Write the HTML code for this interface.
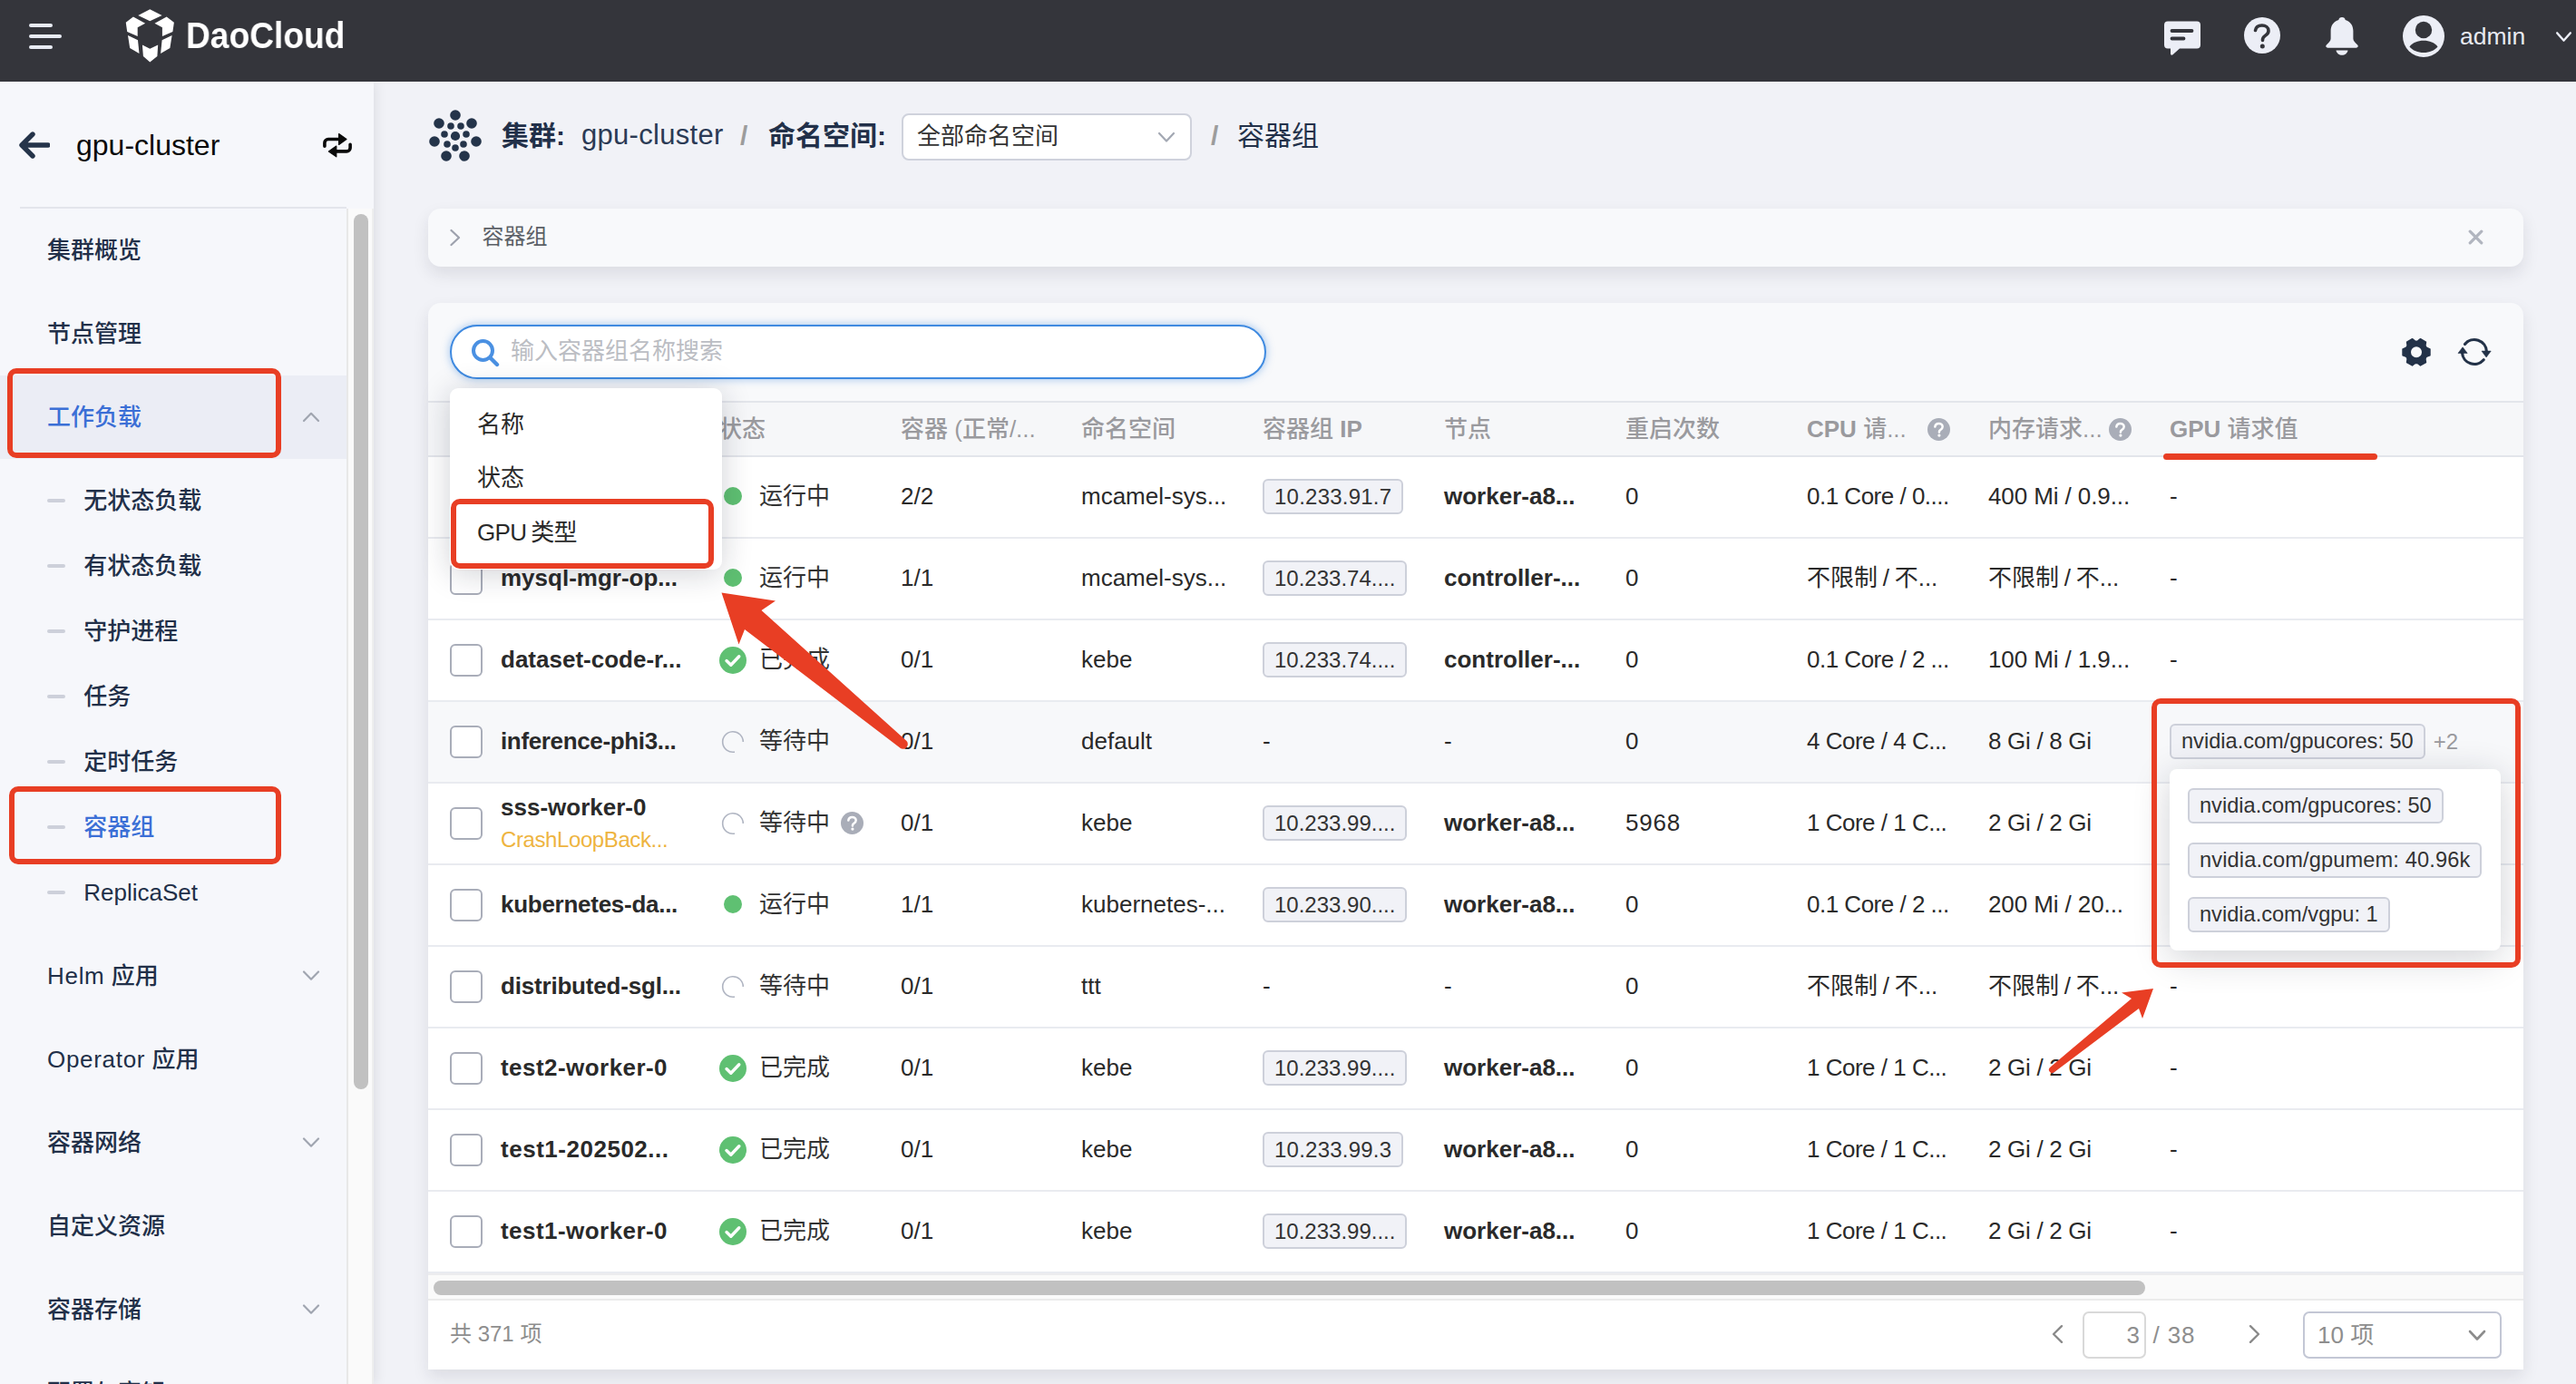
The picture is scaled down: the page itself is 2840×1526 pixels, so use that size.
<!DOCTYPE html>
<html lang="zh-CN">
<head>
<meta charset="utf-8">
<title>DaoCloud - 容器组</title>
<style>
*{box-sizing:border-box;margin:0;padding:0}
html,body{width:2840px;height:1526px;overflow:hidden}
body{position:relative;background:#f1f2f7;font-family:"Liberation Sans","Noto Sans CJK SC",sans-serif;color:#2b3648;font-size:26px}
.abs{position:absolute}
b{font-weight:700}
i{font-style:normal}
/* header */
#hd{position:absolute;left:0;top:0;width:2840px;height:90px;background:#34353b;z-index:50}
#hd .ham i{position:absolute;left:32px;height:4px;border-radius:2px;background:#e8ebf4}
#logo-t{position:absolute;left:205px;top:14px;height:50px;line-height:50px;font-weight:700;font-size:41px;color:#fff;transform:scaleX(.906);transform-origin:0 0;white-space:nowrap;will-change:transform}
#admin{position:absolute;left:2712px;top:24px;line-height:32px;font-size:26.500px;color:#e8eaf2}
/* sidebar */
#sb{position:absolute;left:0;top:90px;width:412px;height:1436px;background:#f6f7fb;z-index:7;box-shadow:1px 0 13px rgba(30,30,36,.11)}
#sb .ttl{position:absolute;left:84px;top:50px;font-size:32px;line-height:40px;color:#0a0a0a}
#sb .hr{position:absolute;left:22px;top:138px;width:360px;height:2px;background:#e3e5ec}
#sb .vr{position:absolute;left:382px;top:140px;width:30px;height:1300px;background:#fafafa;border-left:2px solid #e8e8e8;border-right:2px solid #eee}
#sb .thumb{position:absolute;left:390px;top:146px;width:16px;height:965px;border-radius:8px;background:#c1c1c1}
.mi{position:absolute;left:0;width:382px;height:92px;line-height:93px;padding-left:52px;font-size:26px;font-weight:500;color:#223049}
.mi.act{background:#ebedf5;color:#3b6fd6}
.mi svg{position:absolute;left:332.500px;top:40px;width:20px;height:12px}
.si{position:absolute;left:0;width:382px;height:72px;line-height:75px;padding-left:92.300px;font-size:26px;font-weight:500;color:#223049}
.si:before{content:"";position:absolute;left:52px;top:35px;width:20px;height:4px;border-radius:2px;background:#cdd0da}
.si.act{color:#3b6fd6}
.lt{letter-spacing:.700px}
.red{position:absolute;border:6px solid #e83e24;border-radius:10px;z-index:40}
/* main */
#main{position:absolute;left:412px;top:90px;width:2428px;height:1436px;background:#f1f2f7;z-index:6}
.bc{position:absolute;top:125px;height:50px;line-height:50px;font-size:30px;white-space:nowrap;z-index:7}
.card{position:absolute;left:472px;width:2310px;background:#f8f9fb;border-radius:14px;box-shadow:0 8px 18px rgba(30,32,45,.10);z-index:7}
#search{position:absolute;left:496px;top:358px;width:900px;height:59.500px;border:2px solid #3f8ae0;border-radius:30px;background:#fff;box-shadow:0 0 10px rgba(63,138,224,.5);z-index:9}
#search span{position:absolute;left:65px;top:0;line-height:55px;font-size:26px;color:#bbbdc3}
#th{position:absolute;left:472px;top:442px;width:2310px;height:62px;background:#f6f7f9;border-top:2px solid #e3e5eb;border-bottom:2px solid #e3e5eb;z-index:8}
#th span{position:absolute;top:0;line-height:58px;font-size:26px;font-weight:500;color:#9a9a9e;white-space:nowrap}
.q{position:absolute;width:25px;height:25px}
.tr{position:absolute;left:472px;width:2310px;height:90px;background:#fff;border-bottom:2px solid #e9ebf0;z-index:8}
.tr.hover{background:#f7f8fa}
.c{position:absolute;top:0;height:88px;line-height:86px;white-space:nowrap;font-size:26px;color:#2a2a2a}
.c b{font-weight:700;color:#2a2a2a}
.cb{position:absolute;left:24px;top:26px;width:36px;height:36px;border:2px solid #a9adb9;border-radius:6px;background:#fff}
.nm{left:80px}
.nm.two{line-height:36px;padding-top:8px}
.nm.two b,.nm.two em{display:block;width:max-content}
.nm.two em{font-style:normal;color:#eeb43f;font-size:24px;letter-spacing:-.400px}
.st{left:322px}
.dot{position:absolute;left:4px;top:33px;width:20px;height:20px;border-radius:50%;background:#5fc072}
.chk{position:absolute;left:-1px;top:29px;width:30px;height:30px}
.spin{position:absolute;left:1px;top:31px;width:26px;height:26px}
.stt{position:absolute;left:43px;top:0;color:#333}
.q2{left:133px;top:31px}
.tag{display:inline-block;height:39px;line-height:35px;padding:0 11px;border:2px solid #cdd0da;border-radius:6px;background:#f1f2f7;font-size:24px;color:#333;vertical-align:middle;white-space:nowrap}
.plus{color:#9a9a9e;font-size:24px;margin-left:9px}
#pop{position:absolute;left:2392px;top:848px;width:365px;height:200px;background:#fff;border-radius:8px;box-shadow:0 8px 40px rgba(20,25,45,.2);z-index:30}
.c .tag{position:relative;top:-1.200px}
.tag.nv{font-size:23.600px}
#pop .tag{position:absolute;left:20px}
#dd{position:absolute;left:496px;top:428px;width:300px;height:200px;background:#fff;border-radius:9px;box-shadow:0 4px 34px rgba(20,25,45,.2);z-index:30}
#dd span{position:absolute;left:30px;line-height:60px;font-size:26px;color:#2a2a2a;white-space:nowrap}
#ft{position:absolute;left:472px;top:1433px;width:2310px;height:77px;background:#fff;border-top:0 solid #e6e8ef;z-index:8}
.pg{position:absolute;font-size:26px;color:#8e8e8e;line-height:50px;white-space:nowrap}
.box{position:absolute;top:13px;height:52px;border:2px solid #d3d6df;border-radius:7px;background:#fff}
</style>
</head>
<body>

<!-- ================= header ================= -->
<div id="hd">
  <div class="ham"><i style="top:26px;width:26px"></i><i style="top:38px;width:36px"></i><i style="top:50px;width:26px"></i></div>
  <svg class="abs" style="left:138px;top:10px;width:55px;height:59px" viewBox="0 0 55 59">
    <g fill="#fff">
      <path d="M27.300 0.300L40.600 7 27.300 13.200 14.300 7z"/>
      <path d="M0.750 14.800L8.900 8.400 22.100 15.800 13.700 20.200 13.700 30.100 2.200 25.100z"/>
      <path d="M53.900 14.800L45.700 8.400 32.500 15.800 40.900 20.200 40.900 30.100 52.400 25.100z"/>
      <path d="M3 29.100L14 34.300 15.500 49 5.200 43.100z"/>
      <path d="M51.600 29.100L40.600 34.300 39.100 49 49.400 43.100z"/>
      <path d="M18.900 39.400L27.300 43.800 36.200 39.400 35.400 52 27.300 58.600 19.900 52z"/>
    </g>
  </svg>
  <div id="logo-t">DaoCloud</div>
  <!-- chat -->
  <svg class="abs" style="left:2386px;top:23px;width:40px;height:38px" viewBox="0 0 40 38">
    <path d="M4 0.5h32a4 4 0 0 1 4 4v22a4 4 0 0 1-4 4H17l-7.5 6.8c-1 .9-2.500.2-2.500-1.100V30.500H4a4 4 0 0 1-4-4v-22a4 4 0 0 1 4-4z" fill="#eceef6"/>
    <path d="M8.500 11h22M8.500 19.500h13" stroke="#34353b" stroke-width="3.800" stroke-linecap="round"/>
  </svg>
  <!-- help -->
  <svg class="abs" style="left:2474px;top:19px;width:40px;height:40px" viewBox="0 0 40 40">
    <circle cx="20" cy="20" r="20" fill="#eceef6"/>
    <path d="M12.500 14.500c.6-3.700 3.600-5.500 7.300-5.500 4 0 7.200 2.300 7.200 5.900 0 2.800-1.700 4.100-3.700 5.500-1.900 1.300-2.800 2.200-2.800 4.400v.7" fill="none" stroke="#34353b" stroke-width="3.600" stroke-linecap="round" stroke-linejoin="round"/>
    <circle cx="20.300" cy="32" r="2.500" fill="#34353b"/>
  </svg>
  <!-- bell -->
  <svg class="abs" style="left:2561px;top:18px;width:42px;height:44px" viewBox="0 0 40 44" preserveAspectRatio="none">
    <path d="M20 1c2 0 3.300 1.300 3.500 3 5.300 1.600 8.300 6.300 8.300 12v8.500c0 2.300 1.600 4.300 4.500 7 1.200 1.200.6 3.200-1.400 3.200H5.100c-2 0-2.600-2-1.400-3.200 2.900-2.700 4.500-4.700 4.500-7V16c0-5.700 3-10.400 8.300-12C16.700 2.300 18 1 20 1z" fill="#eceef6"/>
    <path d="M13.800 37.500h12.400c-.6 3.300-3.200 5.300-6.200 5.300s-5.600-2-6.200-5.300z" fill="#eceef6"/>
  </svg>
  <!-- avatar -->
  <svg class="abs" style="left:2649px;top:17px;width:46px;height:46px" viewBox="0 0 46 46">
    <circle cx="23" cy="23" r="23" fill="#eceef6"/>
    <circle cx="23" cy="16" r="9.200" fill="#34353b"/>
    <path d="M7.500 34.500C11 30 16.500 27.800 23 27.800s12 2.200 15.500 6.700C35 38.800 29.500 41 23 41s-12-2.200-15.500-6.500z" fill="#34353b"/>
  </svg>
  <div id="admin">admin</div>
  <svg class="abs" style="left:2817px;top:33.500px;width:19px;height:13.500px" viewBox="0 0 22 14" preserveAspectRatio="none"><path d="M2.500 2.500l8.500 8.500 8.500-8.500" fill="none" stroke="#eceef6" stroke-width="2.600" stroke-linecap="round" stroke-linejoin="round"/></svg>
</div>

<!-- ================= sidebar ================= -->
<div id="sb">
  <svg class="abs" style="left:21px;top:55px;width:34px;height:30px" viewBox="0 0 34 30"><path d="M15 3L3 15l12 12M4 15h28" fill="none" stroke="#25344a" stroke-width="5.400" stroke-linecap="round" stroke-linejoin="round"/></svg>
  <div class="ttl">gpu-cluster</div>
  <svg class="abs" style="left:350px;top:50px;width:44px;height:40px" viewBox="350 140 44 40"><path d="M357.900 161.300V157.500a4 4 0 0 1 4-4H376M386.100 159.200V162.900a4 4 0 0 1-4 4H368" fill="none" stroke="#0a0a0a" stroke-width="3.600" stroke-linecap="round"/><path d="M373.600 147.600L382 153.500 373.600 159.400zM370.800 161L362.400 166.900 370.800 172.800z" fill="#0a0a0a" stroke="#0a0a0a" stroke-width="1.200" stroke-linejoin="round"/></svg>
  <div class="hr"></div>
  <div class="vr"></div>
  <div class="thumb"></div>

  <div class="mi" style="top:140px">集群概览</div>
  <div class="mi" style="top:232px">节点管理</div>
  <div class="mi act" style="top:324px">工作负载<svg viewBox="0 0 20 12"><path d="M2 10L10 1.800l8 8.200" fill="none" stroke="#a0a5b0" stroke-width="2.200" stroke-linecap="round" stroke-linejoin="round"/></svg></div>
  <div class="si" style="top:425px">无状态负载</div>
  <div class="si" style="top:497px">有状态负载</div>
  <div class="si" style="top:569px">守护进程</div>
  <div class="si" style="top:641px">任务</div>
  <div class="si" style="top:713px">定时任务</div>
  <div class="si act" style="top:785px">容器组</div>
  <div class="si" style="top:857px">ReplicaSet</div>
  <div class="mi" style="top:940px"><span class="lt">Helm</span> 应用<svg viewBox="0 0 20 12"><path d="M2 1.500L10 9.700l8-8.200" fill="none" stroke="#a0a5b0" stroke-width="2.200" stroke-linecap="round" stroke-linejoin="round"/></svg></div>
  <div class="mi" style="top:1032px"><span class="lt">Operator</span> 应用</div>
  <div class="mi" style="top:1124px">容器网络<svg viewBox="0 0 20 12"><path d="M2 1.500L10 9.700l8-8.200" fill="none" stroke="#a0a5b0" stroke-width="2.200" stroke-linecap="round" stroke-linejoin="round"/></svg></div>
  <div class="mi" style="top:1216px">自定义资源</div>
  <div class="mi" style="top:1308px">容器存储<svg viewBox="0 0 20 12"><path d="M2 1.500L10 9.700l8-8.200" fill="none" stroke="#a0a5b0" stroke-width="2.200" stroke-linecap="round" stroke-linejoin="round"/></svg></div>
  <div class="mi" style="top:1400px">配置与密钥</div>
</div>
<div class="red" style="left:8px;top:406px;width:302px;height:99px"></div>
<div class="red" style="left:10px;top:867px;width:300px;height:86px"></div>

<!-- ================= main ================= -->
<div id="main"></div>

<!-- breadcrumb -->
<svg class="abs" style="left:473px;top:121px;width:58px;height:58px;z-index:7" viewBox="0 0 58 58">
  <g fill="#24344a">
    <circle cx="29" cy="6" r="5.800"/><circle cx="47" cy="15" r="5.800"/><circle cx="52" cy="35" r="5.800"/><circle cx="39" cy="51" r="5.800"/><circle cx="19" cy="51" r="5.800"/><circle cx="6" cy="35" r="5.800"/><circle cx="11" cy="15" r="5.800"/>
    <circle cx="29" cy="29" r="5.100"/>
    <circle cx="24" cy="18" r="3.800"/><circle cx="35" cy="18" r="3.800"/><circle cx="41" cy="27" r="3.800"/><circle cx="38" cy="38" r="3.800"/><circle cx="29" cy="42" r="3.800"/><circle cx="20" cy="38" r="3.800"/><circle cx="17" cy="27" r="3.800"/>
  </g>
</svg>
<div class="bc" style="left:553px;font-weight:700;color:#223049">集群:</div>
<div class="bc" style="left:641px;top:124px;color:#2b3a55;font-size:31px;letter-spacing:.300px">gpu-cluster</div>
<div class="bc" style="left:816px;color:#9c9c9c;font-weight:700">/</div>
<div class="bc" style="left:847px;font-weight:700;color:#223049">命名空间:</div>
<div class="abs" style="left:994px;top:125px;width:320px;height:52px;border:2px solid #cfd2dc;border-radius:8px;background:#fff;z-index:7"></div>
<div class="bc" style="left:1011px;font-size:26px;color:#333">全部命名空间</div>
<svg class="abs" style="left:1276px;top:145px;width:20px;height:13px;z-index:8" viewBox="0 0 20 13"><path d="M2 2l8 8.500L18 2" fill="none" stroke="#a3a8b3" stroke-width="2.200" stroke-linecap="round" stroke-linejoin="round"/></svg>
<div class="bc" style="left:1335px;color:#9c9c9c;font-weight:700">/</div>
<div class="bc" style="left:1364px;color:#24324a">容器组</div>

<!-- collapse card -->
<div class="card" style="top:230px;height:64px"></div>
<svg class="abs" style="left:495px;top:252px;width:14px;height:20px;z-index:8" viewBox="0 0 14 20"><path d="M2.500 2l8.500 8-8.500 8" fill="none" stroke="#9da1ad" stroke-width="2.200" stroke-linecap="round" stroke-linejoin="round"/></svg>
<div class="abs" style="left:531.500px;top:236px;line-height:50px;font-size:24px;color:#5b5f66;z-index:8">容器组</div>
<svg class="abs" style="left:2721px;top:253px;width:17px;height:17px;z-index:8" viewBox="0 0 17 17"><path d="M2.200 2.200l12.600 12.600M14.800 2.200L2.200 14.800" fill="none" stroke="#b1b5bf" stroke-width="3.200" stroke-linecap="round"/></svg>

<!-- table card -->
<div class="card" style="top:334px;height:1176px;border-radius:14px 14px 0 0"></div>
<div id="search">
  <svg class="abs" style="left:21px;top:13px;width:32px;height:32px" viewBox="0 0 32 32"><circle cx="13.500" cy="13.500" r="10.500" fill="none" stroke="#4a90e2" stroke-width="4"/><path d="M21.500 21.500l7.500 7.500" stroke="#4a90e2" stroke-width="4.400" stroke-linecap="round"/></svg>
  <span>输入容器组名称搜索</span>
</div>
<!-- gear -->
<svg class="abs" style="left:2640px;top:365px;width:50px;height:48px;z-index:9" viewBox="2640 365 50 48"><path fill="#233248" stroke="#233248" stroke-width="1.600" stroke-linejoin="round" fill-rule="evenodd" d="M2678.900 384.900 L2678.900 391.700 L2675.600 393 L2674.300 394.200 L2673.900 396 L2674.400 399.500 L2668.500 402.900 L2665.700 400.700 L2664 400.200 L2662.300 400.700 L2659.500 402.900 L2653.600 399.500 L2654.100 396 L2653.700 394.200 L2652.400 393 L2649.100 391.700 L2649.100 384.900 L2652.400 383.600 L2653.700 382.400 L2654.100 380.600 L2653.600 377.100 L2659.500 373.700 L2662.300 375.900 L2664 376.400 L2665.700 375.900 L2668.500 373.700 L2674.400 377.100 L2673.900 380.600 L2674.300 382.400 L2675.600 383.600z M2657.200 388.300a6.800 6.800 0 1 0 13.600 0a6.800 6.800 0 1 0 -13.600 0z"/></svg>
<!-- refresh -->
<svg class="abs" style="left:2700px;top:365px;width:56px;height:48px;z-index:9" viewBox="2700 365 56 48"><path d="M2717.500 379.500A13.500 13.500 0 0 1 2741.400 387.500M2738.200 396.800A13.500 13.500 0 0 1 2714.500 389" fill="none" stroke="#233248" stroke-width="3.200" stroke-linecap="round"/><path d="M2736 387.100h10.200l-5.100 6.800z" fill="#233248" stroke="#233248" stroke-width=".600" stroke-linejoin="round"/><path d="M2710 389.400h10.200l-5.100-6.600z" fill="#233248" stroke="#233248" stroke-width=".600" stroke-linejoin="round"/></svg>

<div id="th">
  <span style="left:80px">名称</span>
  <span style="left:320px">状态</span>
  <span style="left:521px">容器 (正常/...</span>
  <span style="left:720px">命名空间</span>
  <span style="left:920px">容器组 <b>IP</b></span>
  <span style="left:1120px">节点</span>
  <span style="left:1320px">重启次数</span>
  <span style="left:1520px"><b>CPU</b> 请...</span>
  <span style="left:1720px">内存请求...</span>
  <span style="left:1920px"><b>GPU</b> 请求值</span>
  <span style="left:1653px;top:17px;line-height:0"><svg class="q" viewBox="0 0 24 24"><circle cx="12" cy="12" r="12" fill="#a9adb8"/><path d="M8 9.200c.2-2.200 1.800-3.500 4-3.500 2.300 0 4 1.400 4 3.400 0 1.500-.8 2.300-2 3.100-1.100.7-1.600 1.300-1.600 2.400v.3" fill="none" stroke="#fff" stroke-width="2.400" stroke-linecap="round"/><circle cx="12.400" cy="18.300" r="1.550" fill="#fff"/></svg></span>
  <span style="left:1853px;top:17px;line-height:0"><svg class="q" viewBox="0 0 24 24"><circle cx="12" cy="12" r="12" fill="#a9adb8"/><path d="M8 9.200c.2-2.200 1.800-3.500 4-3.500 2.300 0 4 1.400 4 3.400 0 1.500-.8 2.300-2 3.100-1.100.7-1.600 1.300-1.600 2.400v.3" fill="none" stroke="#fff" stroke-width="2.400" stroke-linecap="round"/><circle cx="12.400" cy="18.300" r="1.550" fill="#fff"/></svg></span>
</div>
<div class="abs" style="left:2385px;top:500px;width:236px;height:7px;border-radius:3.500px;background:#e83e24;z-index:40"></div>

<div class="tr" style="top:504px">
<i class="cb"></i>
<span class="c nm"><b>mysql-mgr-op...</b></span>
<span class="c st"><i class="dot"></i><span class="stt">运行中</span></span>
<span class="c" style="left:521px">2/2</span>
<span class="c" style="left:720px">mcamel-sys...</span>
<span class="c" style="left:920px"><span class="tag" style="letter-spacing:.23px">10.233.91.7</span></span>
<span class="c" style="left:1120px"><b>worker-a8...</b></span>
<span class="c" style="left:1320px">0</span>
<span class="c" style="left:1520px;letter-spacing:-.5px">0.1 Core / 0....</span>
<span class="c" style="left:1720px;letter-spacing:-.1px">400 Mi / 0.9...</span>
<span class="c" style="left:1920px">-</span>
</div>
<div class="tr" style="top:594px">
<i class="cb"></i>
<span class="c nm"><b>mysql-mgr-op...</b></span>
<span class="c st"><i class="dot"></i><span class="stt">运行中</span></span>
<span class="c" style="left:521px">1/1</span>
<span class="c" style="left:720px">mcamel-sys...</span>
<span class="c" style="left:920px"><span class="tag">10.233.74....</span></span>
<span class="c" style="left:1120px"><b>controller-...</b></span>
<span class="c" style="left:1320px">0</span>
<span class="c" style="left:1520px;word-spacing:-1.5px">不限制 / 不...</span>
<span class="c" style="left:1720px;word-spacing:-1.5px">不限制 / 不...</span>
<span class="c" style="left:1920px">-</span>
</div>
<div class="tr" style="top:684px">
<i class="cb"></i>
<span class="c nm"><b>dataset-code-r...</b></span>
<span class="c st"><svg class="chk" viewBox="0 0 30 30"><circle cx="15" cy="15" r="15" fill="#5fc072"/><path d="M8 15.6l4.8 4.6 9-9.4" fill="none" stroke="#fff" stroke-width="3.4" stroke-linecap="round" stroke-linejoin="round"/></svg><span class="stt">已完成</span></span>
<span class="c" style="left:521px">0/1</span>
<span class="c" style="left:720px">kebe</span>
<span class="c" style="left:920px"><span class="tag">10.233.74....</span></span>
<span class="c" style="left:1120px"><b>controller-...</b></span>
<span class="c" style="left:1320px">0</span>
<span class="c" style="left:1520px;letter-spacing:-.5px">0.1 Core / 2 ...</span>
<span class="c" style="left:1720px;letter-spacing:-.1px">100 Mi / 1.9...</span>
<span class="c" style="left:1920px">-</span>
</div>
<div class="tr hover" style="top:774px">
<i class="cb"></i>
<span class="c nm"><b style="letter-spacing:-0.35px">inference-phi3...</b></span>
<span class="c st"><svg class="spin" viewBox="0 0 26 26"><path d="M24.3 13A11.3 11.3 0 1 0 14.96 24.13" fill="none" stroke="#b0b5c2" stroke-width="1.6"/></svg><span class="stt">等待中</span></span>
<span class="c" style="left:521px">0/1</span>
<span class="c" style="left:720px">default</span>
<span class="c" style="left:920px">-</span>
<span class="c" style="left:1120px">-</span>
<span class="c" style="left:1320px">0</span>
<span class="c" style="left:1520px;letter-spacing:-.5px">4 Core / 4 C...</span>
<span class="c" style="left:1720px;letter-spacing:-.3px">8 Gi / 8 Gi</span>
<span class="c" style="left:1920px"><span class="tag nv">nvidia.com/gpucores: 50</span><span class="plus">+2</span></span>
</div>
<div class="tr" style="top:864px">
<i class="cb"></i>
<span class="c nm two"><b>sss-worker-0</b><em>CrashLoopBack...</em></span>
<span class="c st"><svg class="spin" viewBox="0 0 26 26"><path d="M24.3 13A11.3 11.3 0 1 0 14.96 24.13" fill="none" stroke="#b0b5c2" stroke-width="1.6"/></svg><span class="stt">等待中</span><svg class="q q2" viewBox="0 0 24 24"><circle cx="12" cy="12" r="12" fill="#a9adb8"/><path d="M8 9.200c.2-2.200 1.800-3.500 4-3.500 2.300 0 4 1.400 4 3.400 0 1.500-.8 2.300-2 3.100-1.100.7-1.600 1.300-1.600 2.400v.3" fill="none" stroke="#fff" stroke-width="2.400" stroke-linecap="round"/><circle cx="12.400" cy="18.300" r="1.550" fill="#fff"/></svg></span>
<span class="c" style="left:521px">0/1</span>
<span class="c" style="left:720px">kebe</span>
<span class="c" style="left:920px"><span class="tag">10.233.99....</span></span>
<span class="c" style="left:1120px"><b>worker-a8...</b></span>
<span class="c" style="left:1320px;letter-spacing:.8px">5968</span>
<span class="c" style="left:1520px;letter-spacing:-.5px">1 Core / 1 C...</span>
<span class="c" style="left:1720px;letter-spacing:-.3px">2 Gi / 2 Gi</span>
</div>
<div class="tr" style="top:954px">
<i class="cb"></i>
<span class="c nm"><b style="letter-spacing:-0.27px">kubernetes-da...</b></span>
<span class="c st"><i class="dot"></i><span class="stt">运行中</span></span>
<span class="c" style="left:521px">1/1</span>
<span class="c" style="left:720px">kubernetes-...</span>
<span class="c" style="left:920px"><span class="tag">10.233.90....</span></span>
<span class="c" style="left:1120px"><b>worker-a8...</b></span>
<span class="c" style="left:1320px">0</span>
<span class="c" style="left:1520px;letter-spacing:-.5px">0.1 Core / 2 ...</span>
<span class="c" style="left:1720px;letter-spacing:-.1px">200 Mi / 20...</span>
</div>
<div class="tr" style="top:1044px">
<i class="cb"></i>
<span class="c nm"><b style="letter-spacing:-0.19px">distributed-sgl...</b></span>
<span class="c st"><svg class="spin" viewBox="0 0 26 26"><path d="M24.3 13A11.3 11.3 0 1 0 14.96 24.13" fill="none" stroke="#b0b5c2" stroke-width="1.6"/></svg><span class="stt">等待中</span></span>
<span class="c" style="left:521px">0/1</span>
<span class="c" style="left:720px">ttt</span>
<span class="c" style="left:920px">-</span>
<span class="c" style="left:1120px">-</span>
<span class="c" style="left:1320px">0</span>
<span class="c" style="left:1520px;word-spacing:-1.5px">不限制 / 不...</span>
<span class="c" style="left:1720px;word-spacing:-1.5px">不限制 / 不...</span>
<span class="c" style="left:1920px">-</span>
</div>
<div class="tr" style="top:1134px">
<i class="cb"></i>
<span class="c nm"><b style="letter-spacing:0.45px">test2-worker-0</b></span>
<span class="c st"><svg class="chk" viewBox="0 0 30 30"><circle cx="15" cy="15" r="15" fill="#5fc072"/><path d="M8 15.6l4.8 4.6 9-9.4" fill="none" stroke="#fff" stroke-width="3.4" stroke-linecap="round" stroke-linejoin="round"/></svg><span class="stt">已完成</span></span>
<span class="c" style="left:521px">0/1</span>
<span class="c" style="left:720px">kebe</span>
<span class="c" style="left:920px"><span class="tag">10.233.99....</span></span>
<span class="c" style="left:1120px"><b>worker-a8...</b></span>
<span class="c" style="left:1320px">0</span>
<span class="c" style="left:1520px;letter-spacing:-.5px">1 Core / 1 C...</span>
<span class="c" style="left:1720px;letter-spacing:-.3px">2 Gi / 2 Gi</span>
<span class="c" style="left:1920px">-</span>
</div>
<div class="tr" style="top:1224px">
<i class="cb"></i>
<span class="c nm"><b style="letter-spacing:0.52px">test1-202502...</b></span>
<span class="c st"><svg class="chk" viewBox="0 0 30 30"><circle cx="15" cy="15" r="15" fill="#5fc072"/><path d="M8 15.6l4.8 4.6 9-9.4" fill="none" stroke="#fff" stroke-width="3.4" stroke-linecap="round" stroke-linejoin="round"/></svg><span class="stt">已完成</span></span>
<span class="c" style="left:521px">0/1</span>
<span class="c" style="left:720px">kebe</span>
<span class="c" style="left:920px"><span class="tag" style="letter-spacing:.23px">10.233.99.3</span></span>
<span class="c" style="left:1120px"><b>worker-a8...</b></span>
<span class="c" style="left:1320px">0</span>
<span class="c" style="left:1520px;letter-spacing:-.5px">1 Core / 1 C...</span>
<span class="c" style="left:1720px;letter-spacing:-.3px">2 Gi / 2 Gi</span>
<span class="c" style="left:1920px">-</span>
</div>
<div class="tr" style="top:1314px">
<i class="cb"></i>
<span class="c nm"><b style="letter-spacing:0.45px">test1-worker-0</b></span>
<span class="c st"><svg class="chk" viewBox="0 0 30 30"><circle cx="15" cy="15" r="15" fill="#5fc072"/><path d="M8 15.6l4.8 4.6 9-9.4" fill="none" stroke="#fff" stroke-width="3.4" stroke-linecap="round" stroke-linejoin="round"/></svg><span class="stt">已完成</span></span>
<span class="c" style="left:521px">0/1</span>
<span class="c" style="left:720px">kebe</span>
<span class="c" style="left:920px"><span class="tag">10.233.99....</span></span>
<span class="c" style="left:1120px"><b>worker-a8...</b></span>
<span class="c" style="left:1320px">0</span>
<span class="c" style="left:1520px;letter-spacing:-.5px">1 Core / 1 C...</span>
<span class="c" style="left:1720px;letter-spacing:-.3px">2 Gi / 2 Gi</span>
<span class="c" style="left:1920px">-</span>
</div>

<!-- h scrollbar -->
<div class="abs" style="left:472px;top:1404px;width:2310px;height:30px;background:#fafafa;border-top:2px solid #ececee;border-bottom:2px solid #ebebeb;z-index:9"></div>
<div class="abs" style="left:478px;top:1412px;width:1887px;height:16px;border-radius:8px;background:#c1c1c1;z-index:9"></div>

<!-- footer -->
<div id="ft">
  <div class="pg" style="left:24px;top:13px;font-size:24px">共 371 项</div>
  <svg class="abs" style="left:1788px;top:26px;width:15px;height:24px" viewBox="0 0 15 24"><path d="M13 3.200L4 12l9 8.800" fill="none" stroke="#8a8a8a" stroke-width="2.400" stroke-linecap="round" stroke-linejoin="round"/></svg>
  <div class="box" style="left:1824px;width:70px;border-color:#d9d9d9"></div>
  <div class="pg" style="left:1824px;top:13.500px;width:63px;text-align:right">3</div>
  <div class="pg" style="left:1901.500px;top:13.500px;letter-spacing:.900px">/ 38</div>
  <svg class="abs" style="left:2006px;top:26px;width:15px;height:24px" viewBox="0 0 15 24"><path d="M3 3.200L12 12l-9 8.800" fill="none" stroke="#8a8a8a" stroke-width="2.400" stroke-linecap="round" stroke-linejoin="round"/></svg>
  <div class="box" style="left:2066.500px;width:219.500px;border-color:#c3c7d5"></div>
  <div class="pg" style="left:2083px;top:13.500px">10 项</div>
  <svg class="abs" style="left:2248.500px;top:33px;width:20px;height:13px" viewBox="0 0 20 13"><path d="M2 2l8 8.500L18 2" fill="none" stroke="#8c8c8c" stroke-width="2.600" stroke-linecap="round" stroke-linejoin="round"/></svg>
</div>

<!-- dropdown -->
<div id="dd">
  <span style="top:10px">名称</span>
  <span style="top:69px">状态</span>
  <span style="top:129px;letter-spacing:-.600px;word-spacing:-2px">GPU 类型</span>
</div>
<div class="red" style="left:497px;top:550px;width:290px;height:77px"></div>

<!-- gpu popover -->
<div id="pop">
  <span class="tag nv" style="top:20.500px">nvidia.com/gpucores: 50</span>
  <span class="tag nv" style="top:80.500px;letter-spacing:.130px">nvidia.com/gpumem: 40.96k</span>
  <span class="tag nv" style="top:140.500px">nvidia.com/vgpu: 1</span>
</div>
<div class="red" style="left:2372px;top:770px;width:407px;height:297px"></div>

<!-- arrows -->
<svg class="abs" style="left:0;top:0;width:2840px;height:1526px;z-index:45;pointer-events:none" viewBox="0 0 2840 1526">
  <path d="M795.500 653.500L855 662.500 839.500 673 999.500 817a5 5 0 0 1-8 7L821 694 814.500 710.500z" fill="#e83e24"/>
  <path d="M2374 1090L2339 1094.500 2350 1101 2260 1177a3.500 3.500 0 0 0 5 5L2358 1112 2362 1123z" fill="#e83e24"/>
</svg>

</body>
</html>
